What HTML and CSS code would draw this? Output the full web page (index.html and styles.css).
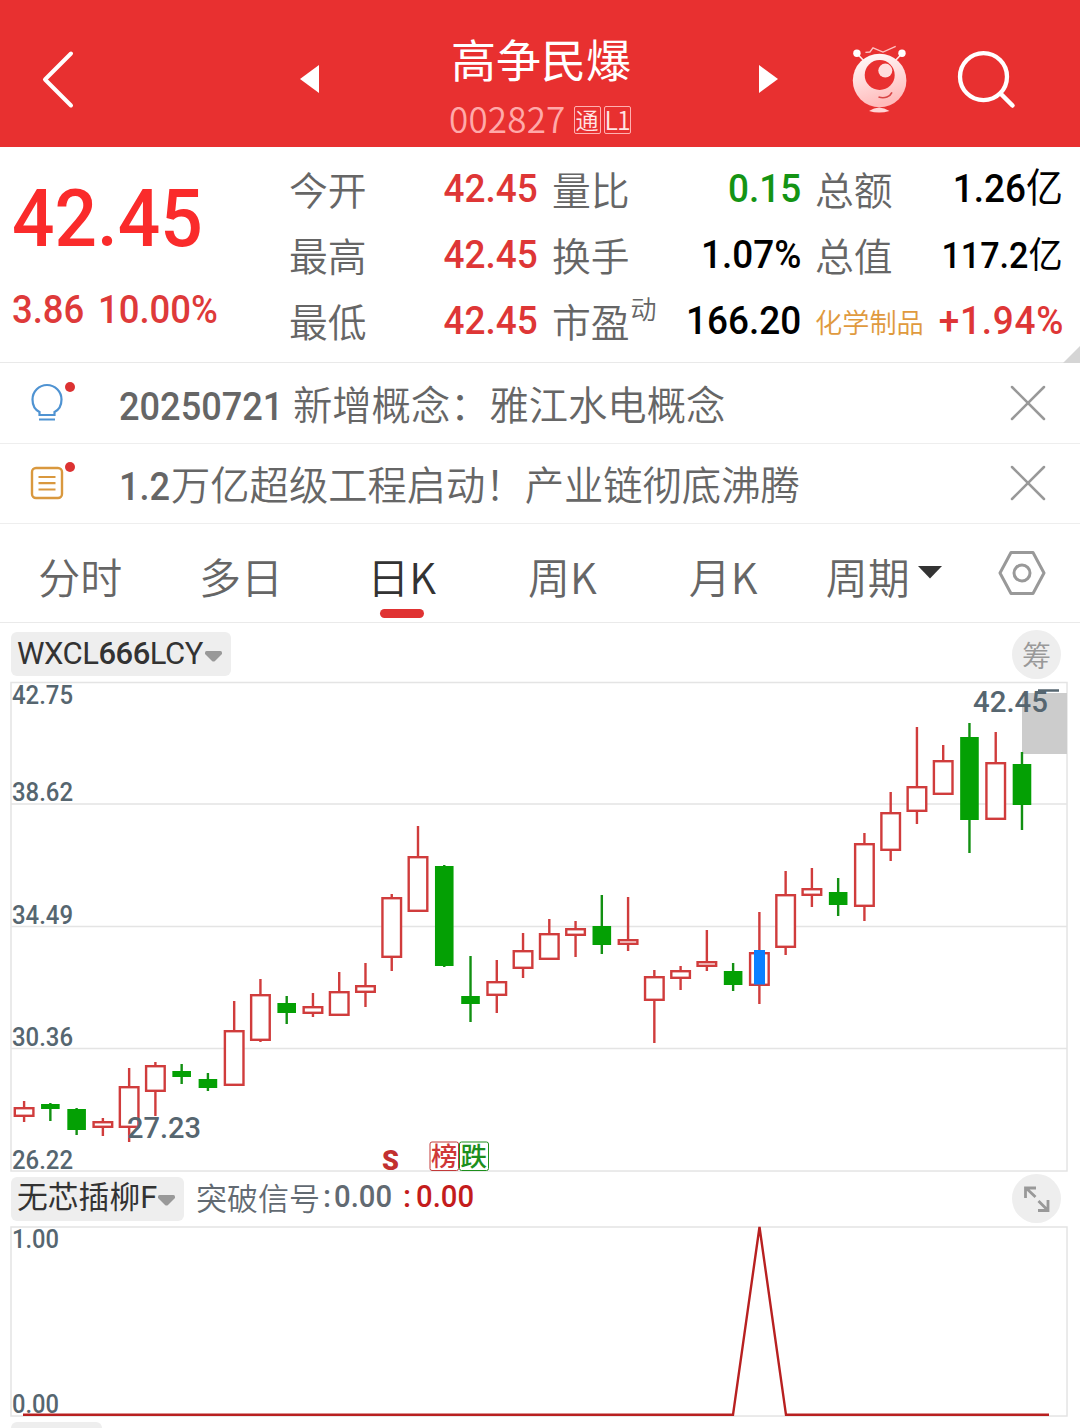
FILE: index.html
```
<!DOCTYPE html>
<html lang="zh-CN">
<head>
    <meta charset="UTF-8">
    <meta name="viewport" content="width=device-width, initial-scale=1.0">
    <title>高争民爆 002827</title>
    <link rel="stylesheet" href="styles.css">
</head>
<body>
    <header class="header">
        <svg class="back" width="36" height="60" viewBox="0 0 36 60"><path d="M31 4.5L5 30.5L31 56.5" fill="none" stroke="#fff" stroke-width="4" stroke-linecap="round" stroke-linejoin="round"/></svg>
        <svg class="prev" width="19" height="28" viewBox="0 0 19 28"><path d="M19 0V28L0 14Z" fill="#fff"/></svg>
        <div class="stock">
            <h1>高争民爆</h1>
            <div class="code"><span class="digits">002827</span><span class="tag">通</span><span class="tag latin">L1</span></div>
        </div>
        <svg class="next" width="19" height="28" viewBox="0 0 19 28"><path d="M0 0V28L19 14Z" fill="#fff"/></svg>
        <svg class="robot" width="56" height="70" viewBox="852 45 56 70">
            <defs>
                <linearGradient id="ball" x1="0" y1="0" x2="0.3" y2="1">
                    <stop offset="0" stop-color="#fff"/>
                    <stop offset="1" stop-color="#ffbcbc"/>
                </linearGradient>
            </defs>
            <path d="M857 53.5L864 61M902 53.5L895 61" stroke="#ffe5e5" stroke-width="1.6"/>
            <circle cx="856.9" cy="53.3" r="3.7" fill="#fff"/>
            <circle cx="902" cy="53.3" r="3.7" fill="#fff"/>
            <path d="M865.4 52.3L869.9 52L873 47.8L883 52L895.7 46.3" fill="none" stroke="#ffc4c4" stroke-width="1.3"/>
            <circle cx="879.6" cy="80.5" r="26.8" fill="url(#ball)"/>
            <circle cx="879.7" cy="75" r="15" fill="#e83030"/>
            <circle cx="885.3" cy="70.6" r="7" fill="#ffdede"/>
            <path d="M878.5 97C885 99 890 96.500 892 92.300" fill="none" stroke="#d84545" stroke-width="1.6"/>
            <path d="M869 111Q879 104 889.500 111Q879 114 869 111Z" fill="#ffd5d5"/>
        </svg>
        <svg class="search" width="60" height="60" viewBox="956 49 60 60"><circle cx="983.5" cy="76.700" r="23.500" fill="none" stroke="#fff" stroke-width="4.300"/><path d="M1001 94L1012.500 105.500" stroke="#fff" stroke-width="4.500" stroke-linecap="round"/></svg>
    </header>

    <section class="quote">
        <div class="price">
            <div class="last"><span class="num">42.45</span></div>
            <div class="change"><span class="num">3.86</span><span class="num">10.00%</span></div>
        </div>
        <div class="col">
            <div class="item"><span>今开</span><b class="num up">42.45</b></div>
            <div class="item"><span>最高</span><b class="num up">42.45</b></div>
            <div class="item"><span>最低</span><b class="num up">42.45</b></div>
        </div>
        <div class="col">
            <div class="item"><span>量比</span><b class="num down">0.15</b></div>
            <div class="item"><span>换手</span><b class="num">1.07%</b></div>
            <div class="item"><span>市盈<sup>动</sup></span><b class="num">166.20</b></div>
        </div>
        <div class="col">
            <div class="item"><span>总额</span><b class="num">1.26<i>亿</i></b></div>
            <div class="item"><span>总值</span><b class="num cap">117.2<i>亿</i></b></div>
            <div class="item"><span class="sector">化学制品</span><b class="num up wide">+1.94%</b></div>
        </div>
        <div class="corner"></div>
    </section>

    <section class="notice">
        <div class="notice-icon">
            <svg width="36" height="40" viewBox="0 0 36 40" fill="none" stroke="#4f93d2" stroke-width="2.200"><path d="M10.500 32V29C5.500 26.500 3.500 21.500 3.500 16.500A14.500 14.500 0 0 1 32.500 16.500C32.500 21.500 30.500 26.500 25.500 29V32ZM10 36.500H26"/></svg>
            <span class="dot"></span>
        </div>
        <p><span class="num date">20250721</span>新增概念：雅江水电概念</p>
        <svg class="close" width="36" height="36" viewBox="0 0 36 36"><path d="M2 2L34 34M34 2L2 34" stroke="#999" stroke-width="2.500" stroke-linecap="round"/></svg>
    </section>
    <section class="notice">
        <div class="notice-icon">
            <svg width="36" height="40" viewBox="0 0 36 40" fill="none" stroke="#d9983e" stroke-width="2.400"><rect x="3" y="5" width="30" height="30" rx="4"/><path d="M9.500 14H26.500M9.500 20.200H26.500M9.500 26.500H26.500" stroke-width="2.200"/></svg>
            <span class="dot"></span>
        </div>
        <p><span class="num ratio">1.2</span>万亿超级工程启动！产业链彻底沸腾</p>
        <svg class="close" width="36" height="36" viewBox="0 0 36 36"><path d="M2 2L34 34M34 2L2 34" stroke="#999" stroke-width="2.500" stroke-linecap="round"/></svg>
    </section>

    <nav class="tabs">
        <a>分时</a>
        <a>多日</a>
        <a class="active">日K</a>
        <a>周K</a>
        <a>月K</a>
        <a>周期<svg class="caret" width="24" height="13" viewBox="0 0 24 13"><path d="M0 0H24L12 12.500Z" fill="#333"/></svg></a>
        <span class="setting">
            <svg width="48" height="46" viewBox="0 0 48 46" fill="none" stroke="#999" stroke-width="3"><path d="M13 2.500H35L46 23L35 43.500H13L2 23Z" stroke-linejoin="round"/><circle cx="24" cy="23" r="8"/></svg>
        </span>
    </nav>

    <div class="bar">
        <div class="chip"><span class="name latin-name">WXCL<b>666</b>LCY</span><svg width="17" height="11" viewBox="0 0 17 11"><path d="M0 1.500Q0 0 1.500 0H15.500Q17 0 17 1.500V3L10 10Q8.500 11 7 10L0 3Z" fill="#999"/></svg></div>
        <div class="round">筹</div>
    </div>
    <svg class="chart" id="kline" width="1080" height="490" viewBox="0 682 1080 490">
        <path class="grid" d="M11 804H1067M11 926.500H1067M11 1048.500H1067"/>
        <rect class="frame" x="11" y="682.500" width="1056" height="488.500"/>
        <rect x="1022" y="693" width="45" height="61" fill="#ccc"/>
        <path d="M1038 690.500H1059" stroke="#566670" stroke-width="2.500"/>
        <g id="candles"></g>
        <rect x="754" y="950" width="11" height="34.500" fill="#0a80ff"/>
        <g class="axis">
            <text x="12" y="704" textLength="61" lengthAdjust="spacingAndGlyphs">42.75</text>
            <text x="12" y="801" textLength="61" lengthAdjust="spacingAndGlyphs">38.62</text>
            <text x="12" y="924" textLength="61" lengthAdjust="spacingAndGlyphs">34.49</text>
            <text x="12" y="1046" textLength="61" lengthAdjust="spacingAndGlyphs">30.36</text>
            <text x="12" y="1169" textLength="61" lengthAdjust="spacingAndGlyphs">26.22</text>
        </g>
        <g class="mark">
            <text x="127" y="1137.500" textLength="74" lengthAdjust="spacingAndGlyphs">27.23</text>
            <text x="973" y="712" textLength="75" lengthAdjust="spacingAndGlyphs">42.45</text>
        </g>
        <text class="sell" x="382" y="1169.500">S</text>
        <rect x="430" y="1142" width="28.500" height="28.500" rx="2" fill="#fff" stroke="#c23a3a"/>
        <text class="badge red" x="431" y="1166">榜</text>
        <rect x="459.500" y="1142" width="29" height="28.500" rx="2" fill="#fff" stroke="#1d8f1d"/>
        <text class="badge green" x="460.500" y="1166">跌</text>
    </svg>

    <div class="bar bar2">
        <div class="chip"><span class="name">无芯插柳F</span><svg width="17" height="11" viewBox="0 0 17 11"><path d="M0 1.500Q0 0 1.500 0H15.500Q17 0 17 1.500V3L10 10Q8.500 11 7 10L0 3Z" fill="#999"/></svg></div>
        <div class="signal">突破信号<span class="num">:</span><span class="num">0.00</span><b class="num">:</b><b class="num">0.00</b></div>
        <div class="round">
            <svg width="26" height="26" viewBox="0 0 26 26" fill="none" stroke="#999" stroke-width="2.800"><path d="M1.500 12V2H12M2 2L11.500 11M24 14V24.500H14M24 24.500L14.500 15"/></svg>
        </div>
    </div>
    <svg class="chart" width="1080" height="190" viewBox="0 1227 1080 190">
        <rect class="frame" x="11" y="1227" width="1056" height="189"/>
        <g class="axis">
            <text x="12" y="1248" textLength="47" lengthAdjust="spacingAndGlyphs">1.00</text>
            <text x="12" y="1413" textLength="47" lengthAdjust="spacingAndGlyphs">0.00</text>
        </g>
        <path d="M23 1414.800H733L759.500 1227L786 1414.800H1049" fill="none" stroke="#b82020" stroke-width="2.400"/>
    </svg>

    <div class="next-bar">
        <div class="chip"></div>
    </div>
    <script src="script.js"></script>
</body>
</html>
```
FILE: styles.css
```
* {
    box-sizing: border-box;
}

body {
    margin: 0;
    width: 1080px;
    height: 1428px;
    overflow: hidden;
    background-color: #fff;
    color: #666;
    font-family: "Noto Sans CJK SC", sans-serif;
    font-weight: 350;
}

svg {
    display: block;
    flex: none;
    overflow: visible;
}

.num {
    display: inline-block;
    font-family: Roboto, "Noto Sans CJK SC", sans-serif;
    font-weight: 500;
    white-space: nowrap;
}

.header {
    height: 147px;
    display: flex;
    align-items: flex-start;
    background-color: #e83030;
    color: #fff;
}

.back { margin: 49px 0 0 40px; }
.prev { margin: 65px 0 0 224px; }
.next { margin: 65px 0 0 127px; }
.robot { margin: 45px 0 0 74px; }
.search { margin: 49px 0 0 48px; }

.stock {
    width: 182px;
    margin: 31px 0 0 131px;
}

.stock h1 {
    margin: 0 0 0 1px;
    font-size: 45px;
    line-height: 56px;
    font-weight: 400;
    white-space: nowrap;
}

.code {
    display: flex;
    align-items: center;
    height: 60px;
    margin: 3px 0 0 -1px;
    color: #ffa9a9;
    font-size: 35px;
    line-height: 60px;
}

.digits {
    margin: -4px 5px 0 0;
    letter-spacing: 0.2px;
}

.tag {
    width: 27px;
    height: 28px;
    margin-left: 3px;
    border: 1px solid #ffb0b0;
    border-radius: 2px;
    color: #ffe5e5;
    font-size: 23px;
    line-height: 25px;
    text-align: center;
}

.latin {
    font-size: 25px;
    letter-spacing: -1px;
}

.quote {
    position: relative;
    display: flex;
    height: 216px;
    padding: 10px 17px 0 12px;
    border-bottom: 1.5px solid #e9e9e9;
}

.price {
    width: 277px;
}

.last {
    height: 122px;
    color: #fa2b2b;
    font-size: 80px;
    line-height: 109px;
}

.last .num {
    transform: scaleX(0.935);
    transform-origin: left;
}

.change {
    display: flex;
    gap: 11px;
    color: #de3a3a;
    font-size: 38px;
    line-height: 62px;
}

.change .num {
    transform: scaleX(0.96);
    transform-origin: left;
}

.col {
    width: 249px;
    margin-right: 14px;
}

.col:nth-child(4) {
    width: 248px;
    margin-right: 0;
}

.item {
    display: flex;
    justify-content: space-between;
    height: 66px;
    font-size: 38.8px;
    line-height: 62px;
    white-space: nowrap;
}

.item .num {
    color: #000;
    font-size: 39.5px;
    line-height: 64px;
    transform: scaleX(0.935);
    transform-origin: right;
}

.item .up { color: #de3636; }
.item .down { color: #149414; }
.item .cap { font-size: 36.5px; line-height: 66px; }
.item .wide { letter-spacing: 0.8px; margin-right: -1px; }

.item i {
    font-style: normal;
    font-weight: 400;
}

.item sup {
    font-size: 26px;
    line-height: 0;
    margin-left: 1px;
    vertical-align: 18px;
}

.item .sector {
    color: #e09a3e;
    font-size: 27.2px;
    line-height: 64px;
}

.corner {
    position: absolute;
    right: 0;
    bottom: -1px;
    border-left: 17px solid transparent;
    border-bottom: 17px solid #d5d5d5;
}

.notice {
    display: flex;
    align-items: center;
    height: 80.5px;
    padding: 0 34px 0 29px;
    border-bottom: 1.5px solid #eee;
}

.notice-icon {
    position: relative;
    width: 90px;
}

.dot {
    position: absolute;
    top: -1px;
    left: 36px;
    width: 10px;
    height: 10px;
    border-radius: 50%;
    background-color: #dc3232;
}

.notice p {
    flex: 1;
    margin: 4px 0 0;
    font-size: 39.3px;
    line-height: 60px;
    white-space: nowrap;
}

.notice .num {
    transform: scaleX(0.92);
    transform-origin: left;
}

.notice .date { width: 174px; }
.notice .ratio { width: 52px; }

.tabs {
    display: flex;
    height: 99px;
    border-bottom: 1.5px solid #eaeaea;
}

.tabs a {
    position: relative;
    display: flex;
    justify-content: center;
    align-items: center;
    width: 160.7px;
    padding-top: 4px;
    font-size: 42px;
}

.tabs .active {
    color: #333;
}

.tabs .active::after {
    content: "";
    position: absolute;
    bottom: 4px;
    left: 59px;
    width: 44px;
    height: 9px;
    border-radius: 5px;
    background-color: #e03232;
}

.caret {
    margin: -5px 0 0 8px;
}

.setting {
    display: flex;
    flex: 1;
    align-items: center;
    justify-content: center;
}

.bar {
    display: flex;
    align-items: center;
    height: 59px;
    padding: 3px 19px 0 11px;
}

.bar2 {
    height: 55px;
    padding: 0 19px 2px 11px;
}

.chip {
    display: flex;
    align-items: center;
    width: 220px;
    height: 44px;
    padding: 0 0 2px 6px;
    border-radius: 6px;
    background-color: #eee;
    color: #333;
    font-family: Roboto, "Noto Sans CJK SC", sans-serif;
    font-size: 30.8px;
    line-height: 42px;
}

.chip .name {
    width: 188px;
    font-weight: 400;
    white-space: nowrap;
}

.chip .latin-name {
    padding-top: 2px;
    font-size: 31px;
    letter-spacing: -0.5px;
}

.chip b {
    font-weight: 500;
}

.chip svg {
    margin-top: 6px;
}

.bar2 .chip {
    width: 173px;
}

.bar2 .chip .name {
    width: 141px;
}

.round {
    display: flex;
    align-items: center;
    justify-content: center;
    width: 49px;
    height: 49px;
    margin-left: auto;
    border-radius: 50%;
    background-color: #eee;
    color: #999;
    font-size: 29px;
}

.signal {
    display: flex;
    align-items: center;
    margin: -4px 0 0 12px;
    color: #626a72;
    font-size: 31px;
    line-height: 44px;
}

.signal .num {
    width: 14px;
    font-size: 30.5px;
    text-align: center;
}

.signal .num:nth-child(2),
.signal b.num:last-child {
    width: 58px;
    text-align: left;
    transform: scaleX(0.96);
    transform-origin: left;
}

.signal b {
    margin-left: 8px;
    color: #c41c1c;
}

.signal b.num:last-child {
    margin-left: 2px;
    width: 60px;
}

.grid,
.frame {
    fill: none;
    stroke: #e4e4e4;
    stroke-width: 1.5;
}

.axis text,
.mark text {
    fill: #566670;
    font-family: Roboto, sans-serif;
    font-size: 26px;
    font-weight: 500;
}

.mark text {
    font-size: 30px;
}

.up-candle {
    fill: #fff;
    stroke: #d03c3c;
    stroke-width: 2.4;
}

.up-wick {
    stroke: #d03c3c;
    stroke-width: 2.4;
}

.down-candle {
    fill: #04a004;
}

.down-wick {
    stroke: #129012;
    stroke-width: 2.4;
}

.sell {
    fill: #c23030;
    font: 900 27px Roboto, sans-serif;
}

.badge {
    font-family: "Noto Sans CJK SC", sans-serif;
    font-size: 26.5px;
    font-weight: 500;
}

.red { fill: #cf3838; }
.green { fill: #1d8f1d; }

.next-bar {
    padding: 5px 11px 0;
}

.next-bar .chip {
    width: 91px;
}
```
FILE: script.js
```
// high, body top, body bottom, low, 1 = up / 0 = down
const candles = [
    [1101, 1107, 1117, 1122, 1],
    [1103, 1104, 1109, 1121, 0],
    [1108, 1109, 1130, 1135, 0],
    [1118, 1121, 1128, 1136, 1],
    [1068, 1086, 1128, 1142, 1],
    [1062, 1065, 1092, 1116, 1],
    [1064, 1071, 1077, 1084, 0],
    [1073, 1079, 1088, 1091, 0],
    [1001, 1030, 1086, 1086, 1],
    [979, 994, 1041, 1042, 1],
    [996, 1003, 1013, 1024, 0],
    [993, 1006, 1014, 1017, 1],
    [972, 991, 1016, 1016, 1],
    [963, 985, 993, 1007, 1],
    [894, 897, 958, 971, 1],
    [826, 856, 912, 912, 1],
    [865, 866, 966, 967, 0],
    [956, 996, 1004, 1022, 0],
    [960, 981, 996, 1013, 1],
    [933, 950, 969, 978, 1],
    [919, 933, 960, 960, 1],
    [921, 928, 936, 957, 1],
    [895, 926, 945, 954, 0],
    [897, 939, 945, 951, 1],
    [970, 976, 1001, 1043, 1],
    [966, 970, 979, 990, 1],
    [930, 961, 967, 971, 1],
    [963, 971, 985, 991, 0],
    [912, 952, 986, 1004, 1],
    [871, 894, 948, 955, 1],
    [868, 888, 896, 907, 1],
    [878, 892, 905, 916, 0],
    [833, 843, 907, 921, 1],
    [792, 812, 851, 861, 1],
    [727, 786, 812, 824, 1],
    [745, 760, 795, 795, 1],
    [723, 737, 820, 853, 0],
    [732, 762, 820, 820, 1],
    [752, 764, 805, 830, 0]
];

const width = 18.6;
let html = "";
candles.forEach(function (c, i) {
    const x = 24.1 + i * 26.26;
    const type = c[4] ? "up" : "down";
    const pad = c[4] ? 1.2 : 0;
    html += `<path class="${type}-wick" d="M${x} ${c[0]}V${c[1] + 1}M${x} ${c[2] - 1}V${c[3]}"/>`;
    html += `<rect class="${type}-candle" x="${x - width / 2}" y="${c[1] + pad}" width="${width}" height="${c[2] - c[1] - pad * 2}"/>`;
});
document.getElementById("candles").innerHTML = html;
```
